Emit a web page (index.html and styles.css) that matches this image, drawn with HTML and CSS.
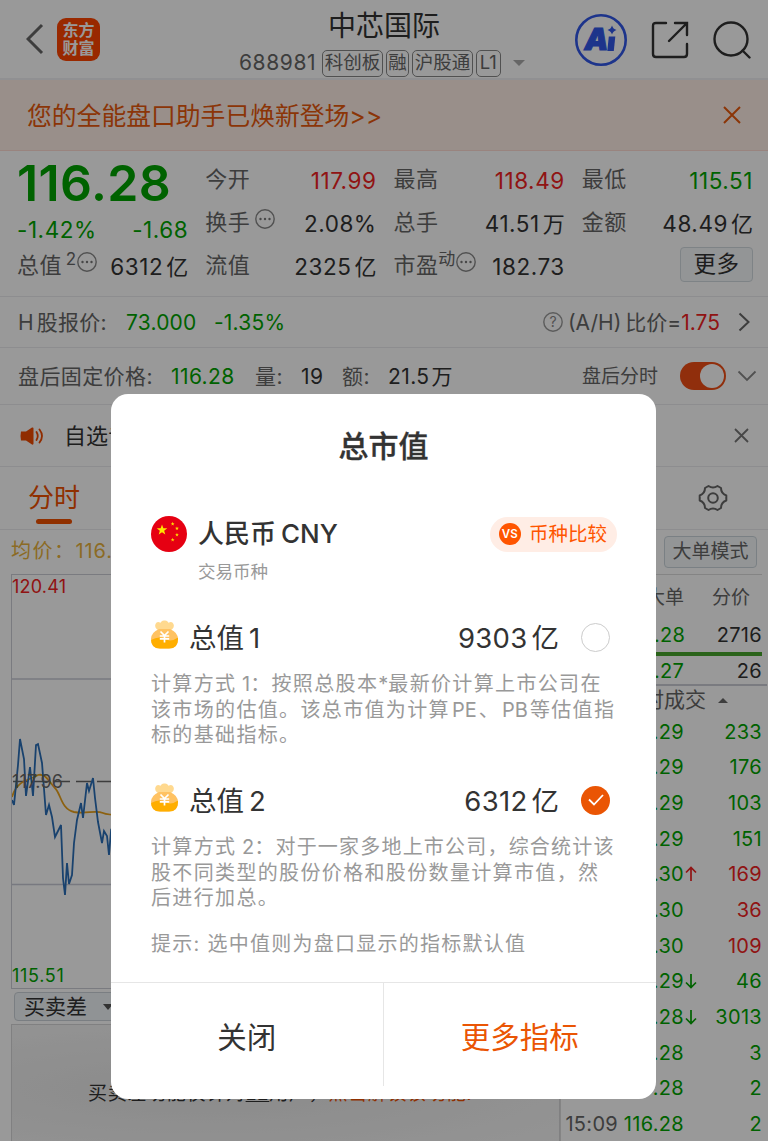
FILE: index.html
```
<!DOCTYPE html>
<html lang="zh-CN">
<head>
    <meta charset="UTF-8">
    <meta name="viewport" content="width=device-width, initial-scale=1.0">
    <title>中芯国际 688981</title>
    <link rel="stylesheet" href="styles.css">
</head>
<body>
    <div class="page">
        <header class="header">
            <div class="header-left">
                <svg class="back" width="18" height="32" viewBox="0 0 18 32"><path d="M16 2 L2 16 L16 30" fill="none" stroke="#666" stroke-width="3"/></svg>
                <div class="logo"><span>东方</span><span>财富</span></div>
            </div>
            <div class="stock">
                <div class="stock-name">中芯国际</div>
                <div class="stock-info">
                    <span class="code">688981</span>
                    <span class="tag">科创板</span>
                    <span class="tag">融</span>
                    <span class="tag">沪股通</span>
                    <span class="tag">L1</span>
                    <i class="caret"></i>
                </div>
            </div>
            <div class="header-right">
                <svg width="52" height="52" viewBox="0 0 52 52">
                    <circle cx="26" cy="26" r="24.7" fill="none" stroke="#3157e8" stroke-width="2.6"/>
                    <text class="ai" x="9.5" y="36">A</text>
                    <path d="M33.8 22.500 h6.500 l-1.500 14.500 h-6.500z" fill="#3157e8"/>
                    <path d="M37 11.500 Q38 15 41.500 16 Q38 17 37 20.500 Q36 17 32.500 16 Q36 15 37 11.500z" fill="#3157e8"/>
                </svg>
                <svg width="38" height="38" viewBox="0 0 38 38" fill="none" stroke="#333" stroke-width="2.4" stroke-linecap="round">
                    <path d="M15 2 H5 Q2 2 2 5 V33 Q2 36 5 36 H33 Q36 36 36 33 V23"/>
                    <path d="M24 2 H36 V14 M36 2 L18 20"/>
                </svg>
                <svg width="38" height="38" viewBox="0 0 38 38" fill="none" stroke="#333" stroke-width="2.4" stroke-linecap="round">
                    <circle cx="18" cy="18" r="16.5"/>
                    <path d="M29.5 29.5 L36.5 36.5"/>
                </svg>
            </div>
        </header>

        <div class="notice">
            <span>您的全能盘口助手已焕新登场&gt;&gt;</span>
            <svg width="18" height="18" viewBox="0 0 18 18"><path d="M1 1 L17 17 M17 1 L1 17" stroke="#e8590c" stroke-width="2"/></svg>
        </div>

        <section class="quote">
            <div class="quote-col">
                <div class="price">116.28</div>
                <div class="quote-row change green"><span>-1.42%</span><span>-1.68</span></div>
                <div class="quote-row"><span class="label">总值<sup class="num">2</sup><svg class="more-dot" width="20" height="20" viewBox="0 0 20 20"><use href="#dots"/></svg></span><span>6312<b>亿</b></span></div>
            </div>
            <div class="quote-col">
                <div class="quote-row"><span class="label">今开</span><span class="red">117.99</span></div>
                <div class="quote-row"><span class="label">换手<svg class="more-dot gap" width="20" height="20" viewBox="0 0 20 20"><use href="#dots"/></svg></span><span>2.08%</span></div>
                <div class="quote-row"><span class="label">流值</span><span>2325<b>亿</b></span></div>
            </div>
            <div class="quote-col">
                <div class="quote-row"><span class="label">最高</span><span class="red">118.49</span></div>
                <div class="quote-row"><span class="label">总手</span><span>41.51<b>万</b></span></div>
                <div class="quote-row"><span class="label">市盈<sup>动</sup><svg class="more-dot" width="20" height="20" viewBox="0 0 20 20"><use href="#dots"/></svg></span><span>182.73</span></div>
            </div>
            <div class="quote-col">
                <div class="quote-row"><span class="label">最低</span><span class="green">115.51</span></div>
                <div class="quote-row"><span class="label">金额</span><span>48.49<b>亿</b></span></div>
                <div class="quote-row more-row"><span class="more-btn">更多</span></div>
            </div>
        </section>

        <section class="h-share">
            <span class="label h-label">H<b>股报价:</b></span>
            <span class="green h-price">73.000</span>
            <span class="green">-1.35%</span>
            <div class="ratio">
                <svg width="20" height="20" viewBox="0 0 20 20"><circle cx="10" cy="10" r="9.2" fill="none" stroke="#999" stroke-width="1.4"/><text class="question" x="10" y="15">?</text></svg>
                <span class="label ratio-text">(A/H)<b>比价=</b></span><span class="red">1.75</span>
                <svg class="arrow" width="12" height="20" viewBox="0 0 12 20"><path d="M1.5 1.5 L10.5 10 L1.5 18.5" fill="none" stroke="#666" stroke-width="2"/></svg>
            </div>
        </section>

        <section class="after-hours">
            <span class="label">盘后固定价格:</span>
            <span class="green">116.28</span>
            <span class="label">量:</span>
            <span>19</span>
            <span class="label">额:</span>
            <span class="amount">21.5<b>万</b></span>
            <span class="label small">盘后分时</span>
            <i class="switch"></i>
            <svg width="20" height="12" viewBox="0 0 20 12"><path d="M1.5 1.5 L10 10 L18.5 1.5" fill="none" stroke="#888" stroke-width="1.8"/></svg>
        </section>

        <section class="news">
            <svg width="24" height="20" viewBox="0 0 24 20">
                <path d="M1 5.5 Q0 10 1 14.500 H6 L12 18.500 Q13.500 19 13.500 17.500 V2.500 Q13.500 1 12 1.500 L6 5.500 Z" fill="#f04a00"/>
                <path d="M16.500 6 Q19 10 16.500 14 M19.500 3.500 Q24.500 10 19.500 16.500" fill="none" stroke="#f04a00" stroke-width="1.8" stroke-linecap="round"/>
            </svg>
            <span class="news-text">自选专区</span>
            <svg width="15" height="15" viewBox="0 0 15 15"><path d="M1 1 L14 14 M14 1 L1 14" stroke="#777" stroke-width="1.8"/></svg>
        </section>

        <nav class="tabs">
            <span class="tab active">分时</span>
            <svg width="30" height="30" viewBox="0 0 30 30" fill="none" stroke="#666" stroke-width="2">
                <path stroke-linejoin="round" d="M10.500 3 Q15 6 19.500 3 L23 5 Q23 10.500 28.300 12.500 V17.500 Q23 19.500 23 25 L19.500 27 Q15 24 10.500 27 L7 25 Q7 19.500 1.700 17.500 V12.500 Q7 10.500 7 5 Z"/>
                <circle cx="15" cy="15" r="4.800"/>
            </svg>
        </nav>

        <main class="main">
            <div class="left">
                <div class="average"><b>均价：</b>116.82</div>
                <div class="chart">
                    <svg width="550" height="414" viewBox="0 0 550 414">
                        <path d="M0 104 H550 M0 309.500 H550" stroke="#c8cad6" stroke-width="1.500"/>
                        <path d="M0 206.500 H550" stroke="#666" stroke-width="1.300" stroke-dasharray="15 6" stroke-dashoffset="-1"/>
                        <path d="M0 222 C5 205 16 206 26 200 C34 198 37 207 43 213 C49 219 49 234 62 237 C74 239 84 235 91 238 C95 240 103 240 110 240" fill="none" stroke="#eaa21c" stroke-width="1.800"/>
                        <path d="M0 225 L2 230 L6 190 L8 164 L12 184 L14 221 L18 192 L21 221 L24 170 L26 169 L30 188 L34 240 L37 230 L40 242 L43 262 L46 256 L49 250 L51 303 L53 320 L55 288 L57 309 L60 300 L62 268 L65 245 L69 228 L71 243 L75 208 L77 216 L81 203 L83 223 L86 247 L90 268 L92 256 L95 261 L97 280 L99 256 L102 261 L106 282 L110 290" fill="none" stroke="#2a6fb8" stroke-width="1.800"/>
                    </svg>
                    <span class="axis top red">120.41</span>
                    <span class="axis middle">117.96</span>
                    <span class="axis bottom green">115.51</span>
                </div>
                <div class="diff-select"><span>买卖差</span><i class="caret"></i></div>
                <div class="locked">买卖差功能仅针对<u>L2</u>用户，<span>点击解锁该功能!</span></div>
            </div>
            <div class="right">
                <div class="mode-row"><span class="mode-btn">大单模式</span></div>
                <div class="right-tabs"><span>大单</span><span>分价</span></div>
                <div class="trade first"><span class="green">116.28</span><span>2716</span></div>
                <div class="bar"></div>
                <div class="trade second"><span class="green">116.27</span><span>26</span></div>
                <div class="deal-title"><span>分时成交</span><i class="caret up"></i></div>
                <div class="deals">
                    <div class="deal green"><span>116.29</span><i></i><span>233</span></div>
                    <div class="deal green"><span>116.29</span><i></i><span>176</span></div>
                    <div class="deal green"><span>116.29</span><i></i><span>103</span></div>
                    <div class="deal green"><span>116.29</span><i></i><span>151</span></div>
                    <div class="deal green"><span>116.30</span><svg class="red" width="12" height="16" viewBox="0 0 12 16"><path d="M6 15 V1.500 M1 6.500 L6 1.500 L11 6.500"/></svg><span class="red">169</span></div>
                    <div class="deal green"><span>116.30</span><i></i><span class="red">36</span></div>
                    <div class="deal green"><span>116.30</span><i></i><span class="red">109</span></div>
                    <div class="deal green"><span>116.29</span><svg width="12" height="16" viewBox="0 0 12 16"><path d="M6 1 V14.500 M1 9.500 L6 14.500 L11 9.500"/></svg><span>46</span></div>
                    <div class="deal green"><span>116.28</span><svg width="12" height="16" viewBox="0 0 12 16"><path d="M6 1 V14.500 M1 9.500 L6 14.500 L11 9.500"/></svg><span>3013</span></div>
                    <div class="deal green"><span>116.28</span><i></i><span>3</span></div>
                    <div class="deal green"><span>116.28</span><i></i><span>2</span></div>
                    <div class="deal green"><em>15:09</em><span>116.28</span><i></i><span>2</span></div>
                </div>
            </div>
        </main>
    </div>

    <div class="overlay">
        <div class="modal">
            <h2 class="modal-title">总市值</h2>
            <div class="currency">
                <svg width="36" height="36" viewBox="0 0 36 36">
                    <circle cx="18" cy="18" r="18" fill="#e60012"/>
                    <g fill="#ffe600">
                        <path id="star" d="M11 8.500 L12.350 12.300 L16.300 12.300 L13.150 14.700 L14.300 18.600 L11 16.300 L7.700 18.600 L8.850 14.700 L5.700 12.300 L9.650 12.300 Z"/>
                        <use href="#star" transform="translate(17.700 2.800) scale(.36)"/>
                        <use href="#star" transform="translate(22 7.400) scale(.36)"/>
                        <use href="#star" transform="translate(22 13.700) scale(.36)"/>
                        <use href="#star" transform="translate(17.700 18.700) scale(.36)"/>
                    </g>
                </svg>
                <span class="currency-name"><b>人民币</b>CNY</span>
                <span class="compare">
                    <svg width="22" height="22" viewBox="0 0 22 22"><circle cx="11" cy="11" r="11" fill="#ff5500"/><text class="vs" x="10.800" y="15">VS</text></svg>
                    <span>币种比较</span>
                </span>
            </div>
            <div class="currency-sub">交易币种</div>

            <div class="option">
                <svg class="bag" width="27" height="29" viewBox="0 0 27 29"><use href="#bag"/></svg>
                <span class="option-name"><b>总值</b>1</span>
                <span class="option-value">9303<b>亿</b></span>
                <i class="radio"></i>
            </div>
            <p class="desc"><b>计算方式</b> 1<b>：按照总股本</b>*<b>最新价计算上市公司在</b><br><b>该市场的估值。该总市值为计算</b><em>PE</em><b>、</b><em>PB</em><b>等估值指</b><br><b>标的基础指标。</b></p>

            <div class="option">
                <svg class="bag" width="27" height="29" viewBox="0 0 27 29"><use href="#bag"/></svg>
                <span class="option-name"><b>总值</b>2</span>
                <span class="option-value">6312<b>亿</b></span>
                <i class="radio checked"><svg width="16" height="12" viewBox="0 0 16 12"><path d="M1 5.500 L6 10.500 L15 1" fill="none" stroke="#fff" stroke-width="1.800"/></svg></i>
            </div>
            <p class="desc"><b>计算方式</b> 2<b class="tight">：对于一家多地上市公司，综合统计该</b><br><b>股不同类型的股份价格和股份数量计算市值，然</b><br><b>后进行加总。</b></p>
            <p class="hint">提示: 选中值则为盘口显示的指标默认值</p>

            <div class="modal-footer">
                <span class="close-btn">关闭</span>
                <span class="more-index">更多指标</span>
            </div>
        </div>
    </div>

    <svg class="symbols" width="0" height="0">
        <symbol id="dots" viewBox="0 0 20 20">
            <circle cx="10" cy="10" r="9.200" fill="none" stroke="#888" stroke-width="1.400"/>
            <circle cx="5.500" cy="10" r="1.200" fill="#777"/><circle cx="10" cy="10" r="1.200" fill="#777"/><circle cx="14.500" cy="10" r="1.200" fill="#777"/>
        </symbol>
        <symbol id="bag" viewBox="0 0 27 29">
            <clipPath id="bag-bottom"><path d="M0 20 Q8 15.500 14 19 T27 17.500 V29 H0 Z"/></clipPath>
            <path d="M7.500 10.500 Q3 7.500 4.500 4 Q6 0.800 9.500 2.800 Q11 0 13.500 0.500 Q16 0 17.500 2.800 Q21 0.800 22.500 4 Q24 7.500 19.500 10.500 Z" fill="#ffd98f"/>
            <path d="M8 9 H19 Q27 12.500 27 19 Q27 28.500 18 28.500 H9 Q0 28.500 0 19 Q0 12.500 8 9 Z" fill="#ffc262"/>
            <path d="M8 9 H19 Q27 12.500 27 19 Q27 28.500 18 28.500 H9 Q0 28.500 0 19 Q0 12.500 8 9 Z" fill="#ffae00" clip-path="url(#bag-bottom)"/>
            <path d="M9.500 11.500 L13.500 15.500 L17.500 11.500 M8.800 16 H18.200 M8.800 18.800 H18.200 M13.500 15.500 V22.500" fill="none" stroke="#fff" stroke-width="1.700"/>
        </symbol>
    </svg>
</body>
</html>
```
FILE: styles.css
```
* {
    box-sizing: border-box;
}
body {
    margin: 0;
    width: 768px;
    height: 1141px;
    overflow: hidden;
    position: relative;
    background-color: #fff;
    color: #333;
    font-family: Inter, "Noto Sans CJK SC", sans-serif;
    font-size: 22px;
}
b, em, i, u {
    font-weight: inherit;
    font-style: normal;
}
span, div {
    white-space: nowrap;
}
svg {
    display: block;
    flex: none;
}
.symbols {
    position: absolute;
}
.green {
    color: #00a400;
}
.red {
    color: #f02222;
}
.label {
    color: #666;
}
.page {
    width: 768px;
    height: 1141px;
    overflow: hidden;
}

/* header */
.header {
    height: 80px;
    display: grid;
    grid-template-columns: 230px 1fr 230px;
    border-bottom: 2px solid #f1f1f3;
}
.header-left {
    display: flex;
    align-items: center;
    gap: 13px;
    padding-left: 26px;
}
.logo {
    width: 43px;
    height: 43px;
    border-radius: 9px;
    background-color: #ff4500;
    color: #fff;
    font-size: 16px;
    font-weight: bold;
    line-height: 18px;
    display: flex;
    flex-direction: column;
    align-items: center;
    justify-content: center;
}
.stock-name {
    font-size: 28px;
    line-height: 34px;
    text-align: center;
    padding-top: 9px;
}
.stock-info {
    display: flex;
    align-items: center;
    gap: 3px;
    padding: 6px 0 0 9px;
    color: #666;
}
.code {
    font-size: 21px;
    line-height: 28px;
    letter-spacing: .6px;
    margin-right: 3px;
}
.tag {
    border: 1.5px solid #888;
    border-radius: 5px;
    height: 27px;
    line-height: 23px;
    padding: 0 1.5px;
    font-size: 18.5px;
}
.tag:nth-child(5) {
    padding: 0 3px;
}
.caret {
    border: 6px solid transparent;
    border-top: 6px solid #aaa;
    border-bottom: 0;
    margin-left: 9px;
}
.header-right {
    display: flex;
    align-items: center;
    justify-content: flex-end;
    gap: 24px;
    padding: 1px 17px 0 0;
}
.ai {
    font-size: 30px;
    font-weight: 900;
    font-style: italic;
    fill: #3157e8;
    stroke: #3157e8;
    stroke-width: 1px;
}
.notice {
    height: 71px;
    display: flex;
    align-items: center;
    justify-content: space-between;
    padding: 0 27px;
    background-color: #ffeee6;
    border-bottom: 1px solid #ffdcd4;
    color: #e8590c;
    font-size: 24.8px;
}
.notice span {
    margin-top: -3px;
}

/* quote */
.quote {
    height: 146px;
    display: grid;
    grid-template-columns: repeat(4, 1fr);
    gap: 17px;
    padding: 8px 15px 0 17px;
    border-bottom: 1px solid #ececee;
}
.quote-row {
    height: 43px;
    display: flex;
    align-items: center;
    justify-content: space-between;
    font-size: 22.5px;
    letter-spacing: .55px;
    line-height: 32px;
}
.quote-row b {
    margin-left: 3px;
    letter-spacing: 0;
    font-size: 22px;
}
.quote-row .label {
    display: flex;
    align-items: center;
    font-size: 22px;
    letter-spacing: .4px;
    margin-top: -3px;
}
.label sup {
    font-size: 17px;
    line-height: 20px;
    margin-bottom: 13px;
    vertical-align: baseline;
}
.label .num {
    margin-left: 4px;
}
.more-dot {
    margin-bottom: 6px;
}
.more-dot.gap {
    margin-left: 5px;
}
.price {
    height: 49px;
    line-height: 49px;
    font-size: 50px;
    font-weight: 600;
    letter-spacing: .4px;
    color: #00a400;
}
.change {
    height: 43px;
    margin-bottom: -6px;
}
.more-row {
    justify-content: flex-end;
}
.more-btn {
    width: 73px;
    height: 35px;
    line-height: 32px;
    text-align: center;
    border: 1px solid #d3dae0;
    border-radius: 4px;
    background-color: #f5f8fa;
    margin-top: -4px;
}
.h-share {
    height: 51px;
    display: flex;
    align-items: center;
    padding: 0 18px;
    border-bottom: 1px solid #ececee;
    font-size: 21px;
    letter-spacing: .2px;
}
.h-label {
    width: 108px;
    margin-top: -2px;
}
.h-label b {
    margin-left: 3px;
}
.h-price {
    width: 88px;
}
.ratio {
    margin-left: auto;
    display: flex;
    align-items: center;
    letter-spacing: 0;
}
.ratio-text {
    margin: -2px 0 0 5px;
}
.ratio-text b {
    margin-left: 4px;
}
.arrow {
    margin-left: 18px;
}
.question {
    font-size: 14px;
    fill: #888;
    text-anchor: middle;
}
.after-hours {
    height: 57px;
    display: grid;
    grid-template-columns: 153px 84px 46px 41px 46px 194px 98px 57px 20px;
    align-items: center;
    padding-left: 18px;
    border-bottom: 1px solid #ececee;
    font-size: 21px;
    letter-spacing: .4px;
}
.after-hours .label, .after-hours .amount {
    margin-top: -3px;
}
.after-hours b {
    margin-left: 2px;
}
.after-hours .small {
    font-size: 19px;
    letter-spacing: 0;
}
.switch {
    width: 46px;
    height: 28px;
    border-radius: 14px;
    background-color: #f04e14;
    padding: 2px;
}
.switch::after {
    content: "";
    display: block;
    width: 24px;
    height: 24px;
    border-radius: 50%;
    background-color: #fff;
    margin-left: auto;
}
.news {
    height: 62px;
    display: flex;
    align-items: center;
    padding: 0 19px 0 20px;
    border-bottom: 1px solid #ececee;
}
.news-text {
    flex: 1;
    margin: -4px 0 0 20px;
}
.tabs {
    height: 63px;
    display: flex;
    align-items: center;
    justify-content: space-between;
    padding: 0 40px 0 28px;
    border-bottom: 1px solid #ececee;
}
.tab {
    height: 62px;
    line-height: 62px;
    font-size: 26px;
}
.tab.active {
    color: #f05000;
    display: flex;
    flex-direction: column;
    align-items: center;
}
.tab.active::after {
    content: "";
    width: 36px;
    height: 5px;
    flex: none;
    border-radius: 3px;
    background-color: #f05000;
    margin-top: -10px;
}

/* chart and deals */
.main {
    display: grid;
    grid-template-columns: 561px 1fr;
    height: 611px;
}
.left {
    padding-left: 11px;
    border-right: 1px solid #ddd;
    display: flex;
    flex-direction: column;
}
.average {
    height: 44px;
    line-height: 43px;
    font-size: 20px;
    letter-spacing: .9px;
    color: #e9b23c;
}
.average b {
    letter-spacing: 1.5px;
}
.chart {
    position: relative;
    height: 415px;
    border: 1px solid #ccced6;
    border-right: 0;
}
.axis {
    position: absolute;
    left: 0;
    font-size: 18px;
    line-height: 22px;
    letter-spacing: .2px;
}
.axis.top {
    top: 1px;
}
.axis.middle {
    top: 196px;
    color: #666;
}
.axis.bottom {
    bottom: 1px;
    letter-spacing: .7px;
}
.diff-select {
    width: 120px;
    height: 29px;
    margin: 3px 0 3px 3px;
    padding-left: 9px;
    display: flex;
    align-items: center;
    border: 1px solid #ccd3d9;
    border-radius: 4px;
    background-color: #f1f5f8;
    font-size: 21px;
}
.diff-select span {
    margin-top: -4px;
}
.diff-select .caret {
    border-top-color: #555;
    border-left-width: 5px;
    border-right-width: 5px;
    margin-left: 16px;
}
.locked {
    flex: 1;
    padding: 53px 0 0 76px;
    border: 1px solid #d5d5d8;
    border-bottom: 0;
    background: radial-gradient(ellipse at 35% 55%, #e8e8e8, #f8f8f8);
    font-size: 19px;
    letter-spacing: .7px;
}
.locked span {
    color: #f05000;
}
.right {
    padding-right: 6px;
    color: #333;
    font-size: 20px;
}
.mode-row {
    height: 45px;
    display: flex;
    align-items: center;
    justify-content: flex-end;
    border-bottom: 1px solid #ddd;
}
.mode-btn {
    width: 93px;
    height: 32px;
    line-height: 30px;
    margin-right: 5px;
    text-align: center;
    border: 1px solid #ccd6dd;
    border-radius: 4px;
    background-color: #f5f9fb;
    color: #666;
    font-size: 19px;
}
.right-tabs {
    height: 41px;
    margin-bottom: 2px;
    display: flex;
    align-items: center;
    justify-content: flex-end;
    gap: 28px;
    padding-right: 12px;
    color: #666;
    font-size: 19px;
}
.trade {
    display: flex;
    justify-content: space-between;
    padding-left: 64px;
    letter-spacing: .3px;
}
.first {
    height: 34px;
    line-height: 34px;
}
.bar {
    height: 4px;
    background-color: #47a52c;
}
.second {
    height: 28px;
    line-height: 30px;
}
.deal-title {
    height: 30px;
    margin-right: -5px;
    padding-left: 61px;
    display: flex;
    align-items: center;
    border-top: 2px solid #ccced6;
    color: #666;
    font-size: 21px;
}
.deal-title span {
    margin-top: -4px;
}
.caret.up {
    border-top: 0;
    border-bottom: 5px solid #666;
    border-left-width: 5px;
    border-right-width: 5px;
    margin-left: 12px;
}
.deal {
    height: 35.65px;
    display: grid;
    grid-template-columns: 123px 16px 1fr;
    align-items: center;
    text-align: right;
    letter-spacing: .3px;
}
.deal:last-child {
    grid-template-columns: 57px 66px 16px 1fr;
}
.deal svg {
    margin-left: 1px;
    fill: none;
    stroke: currentColor;
    stroke-width: 1.7;
}
.deal em {
    color: #666;
}

/* modal */
.overlay {
    position: absolute;
    inset: 0;
    display: flex;
    justify-content: center;
    align-items: flex-start;
    padding: 394px 1px 0 0;
    background-color: rgba(0, 0, 0, .4);
}
.modal {
    width: 545px;
    height: 705px;
    display: flex;
    flex-direction: column;
    border-radius: 17px;
    background-color: #fff;
    overflow: hidden;
}
.modal-title {
    height: 104px;
    line-height: 104px;
    margin: 0 0 18px;
    text-align: center;
    font-size: 30px;
    font-weight: 500;
    -webkit-text-stroke: .3px #333;
}
.currency {
    height: 36px;
    display: flex;
    align-items: center;
    padding: 0 39px 0 40px;
}
.currency-name {
    flex: 1;
    margin: -6px 0 0 11px;
    font-size: 26px;
    font-weight: 500;
}
.currency-name b {
    margin-right: 5px;
}
.compare {
    width: 127px;
    height: 35px;
    display: flex;
    align-items: center;
    gap: 8px;
    padding-left: 9px;
    border-radius: 18px;
    background-color: #ffede5;
    color: #ff5500;
    font-size: 19.5px;
}
.compare span {
    margin-top: -3px;
}
.vs {
    font-size: 11.5px;
    font-weight: 600;
    fill: #fff;
    text-anchor: middle;
}
.currency-sub {
    height: 24px;
    line-height: 24px;
    margin: 8px 0 33px 87px;
    color: #999;
    font-size: 17.5px;
}
.option {
    height: 40px;
    display: flex;
    align-items: center;
    padding: 0 46px 0 40px;
    font-size: 27.5px;
}
.bag {
    margin-top: -5px;
}
.option-name {
    flex: 1;
    margin: -3px 0 0 11px;
}
.option-name b {
    margin-right: 5px;
}
.option-value {
    margin: -3px 22px 0 0;
    letter-spacing: .3px;
}
.option-value b {
    margin-left: 4px;
    letter-spacing: 0;
}
.radio {
    width: 29px;
    height: 29px;
    border: 1.5px solid #ccc;
    border-radius: 50%;
    display: flex;
    align-items: center;
    justify-content: center;
}
.radio.checked {
    border: 0;
    background-color: #ea5504;
}
.desc {
    height: 76px;
    margin: 15px 0 32px 40px;
    color: #999;
    font-size: 20px;
    line-height: 25.6px;
    white-space: nowrap;
}
.desc b {
    letter-spacing: 1.35px;
}
.desc .tight {
    letter-spacing: 1.2px;
}
.desc em {
    margin: 0 2px;
}
.hint {
    height: 25px;
    line-height: 25px;
    margin: -11px 0 25px 40px;
    color: #999;
    font-size: 20px;
    letter-spacing: 1.25px;
}
.modal-footer {
    flex: 1;
    display: grid;
    grid-template-columns: 1fr 1fr;
    border-top: 1px solid #e6e6e6;
    font-size: 29.5px;
    line-height: 109px;
    text-align: center;
}
.close-btn {
    height: 103px;
    border-right: 1px solid #e6e6e6;
}
.more-index {
    color: #ea5504;
}
```
